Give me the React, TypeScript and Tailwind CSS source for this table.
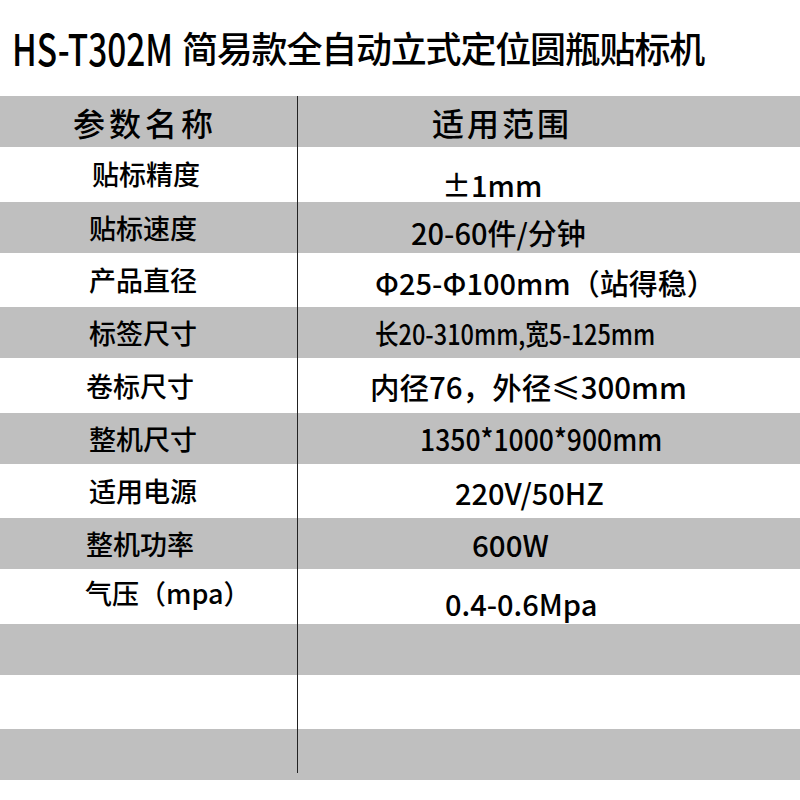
import React from "react";

const F = { fontFamily: '"Noto Sans CJK SC", "Noto Sans", sans-serif' };

type RowProps = {
  gray: boolean;
  label?: React.ReactNode;
  labelCls?: string;
  value?: React.ReactNode;
  valueCls?: string;
  last?: boolean;
};

function Row({ gray, label, labelCls = "", value, valueCls = "", last }: RowProps) {
  return (
    <div className={`flex w-full ${gray ? "h-[51px] bg-[#bfbfbf]" : "h-[54.5px] bg-white"}`}>
      <div className="w-[298px] shrink-0 flex">
        <div className={`flex-1 flex items-center ${last ? "h-[44px]" : "h-full"} border-r border-[#222] ${labelCls}`}>
          {label}
        </div>
      </div>
      <div className={`flex-1 flex items-center whitespace-nowrap ${valueCls}`}>{value}</div>
    </div>
  );
}

export default function App() {
  return (
    <div className="w-[800px] h-[800px] bg-white text-black overflow-hidden font-medium" style={F}>
      <div className="h-[96px] flex items-center pl-[12px] pb-[2px] whitespace-nowrap">
        <span className="inline-block w-[170px] text-[44px] leading-none">
          <span className="inline-block origin-left scale-x-[0.76]">HS-T302M</span>
        </span>
        <span className="text-[36px] leading-none tracking-[-1.2px]">简易款全自动立式定位圆瓶贴标机</span>
      </div>

      <Row
        gray
        label={<span className="text-[32px] tracking-[4px] leading-none">参数名称</span>}
        labelCls="pl-[73px]"
        value={<span className="text-[32px] tracking-[3px] leading-none">适用范围</span>}
        valueCls="pl-[134px]"
      />
      <Row
        gray={false}
        label={<span className="text-[27px] leading-none">贴标精度</span>}
        labelCls="pl-[92px] pb-[2px]"
        value={<span className="text-[29px] leading-none">±1mm</span>}
        valueCls="pl-[144px] pt-[20px]"
      />
      <Row
        gray
        label={<span className="text-[27px] leading-none">贴标速度</span>}
        labelCls="pl-[89px]"
        value={<span className="text-[29px] leading-none">20-60件/分钟</span>}
        valueCls="pl-[113px] pt-[10px]"
      />
      <Row
        gray={false}
        label={<span className="text-[27px] leading-none">产品直径</span>}
        labelCls="pl-[89px]"
        value={<span className="text-[29px] leading-none">Φ25-Φ100mm（站得稳）</span>}
        valueCls="pl-[77px] pt-[6px]"
      />
      <Row
        gray
        label={<span className="text-[27px] leading-none">标签尺寸</span>}
        labelCls="pl-[89px]"
        value={<span className="inline-block origin-left scale-x-[0.84] text-[28px] leading-none">长20-310mm,宽5-125mm</span>}
        valueCls="pl-[77px]"
      />
      <Row
        gray={false}
        label={<span className="text-[27px] leading-none">卷标尺寸</span>}
        labelCls="pl-[86px]"
        value={<span className="text-[29.5px] leading-none">内径76，外径≤300mm</span>}
        valueCls="pl-[72px] pt-[2px]"
      />
      <Row
        gray
        label={<span className="text-[27px] leading-none">整机尺寸</span>}
        labelCls="pl-[89px]"
        value={<span className="inline-block origin-left scale-x-[0.885] text-[30px] leading-none">1350*1000*900mm</span>}
        valueCls="pl-[122px]"
      />
      <Row
        gray={false}
        label={<span className="text-[27px] leading-none">适用电源</span>}
        labelCls="pl-[89px]"
        value={<span className="text-[29px] leading-none">220V/50HZ</span>}
        valueCls="pl-[157px] pt-[4px]"
      />
      <Row
        gray
        label={<span className="text-[27px] leading-none">整机功率</span>}
        labelCls="pl-[86px]"
        value={<span className="text-[29.5px] leading-none">600W</span>}
        valueCls="pl-[174px] pt-[2px]"
      />
      <Row
        gray={false}
        label={<span className="text-[27px] leading-none">气压（mpa）</span>}
        labelCls="pl-[85px] pb-[8px]"
        value={<span className="text-[29px] leading-none">0.4-0.6Mpa</span>}
        valueCls="pl-[147px] pt-[14px]"
      />
      <Row gray />
      <Row gray={false} />
      <Row gray last />
    </div>
  );
}
